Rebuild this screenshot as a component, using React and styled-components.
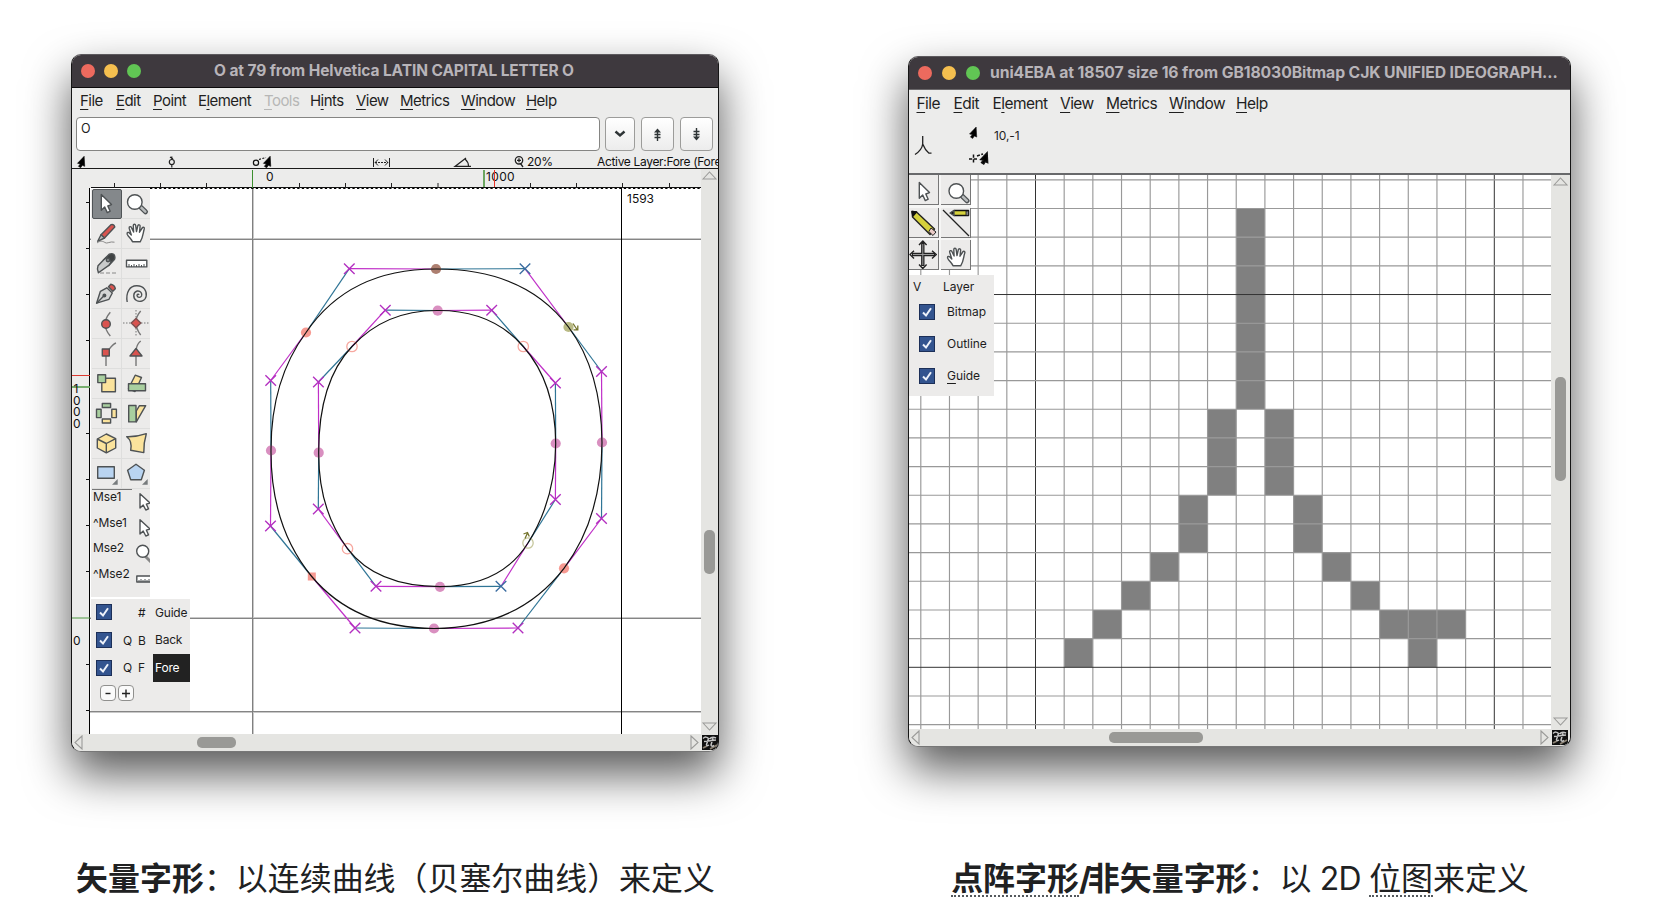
import React from "react";
import styled, { createGlobalStyle } from "styled-components";

const GlobalStyle = createGlobalStyle`
  * { box-sizing: border-box; }
  html, body { margin: 0; background: #fff; overflow: hidden; }
  svg { display: block; }
`;

const UI = `Inter, "Liberation Sans", sans-serif`;

const Page = styled.main`
  width: 1656px;
  height: 898px;
  overflow: hidden;
  display: grid;
  grid-template-columns: 790px 866px;
  background: #fff;
  font-family: ${UI};
  color: #202122;
`;

const Figure = styled.figure`
  margin: 0;
  padding-top: ${(p) => p.$top}px;
  padding-left: ${(p) => p.$left || 0}px;
  height: 898px;
  display: flex;
  flex-direction: column;
  align-items: center;
`;

const Caption = styled.figcaption`
  margin-top: ${(p) => p.$gap}px;
  padding-left: 1px;
  font-family: Inter, "Noto Sans CJK SC", sans-serif;
  font-size: 31.95px;
  line-height: 44px;
  white-space: nowrap;
`;

const Latin = styled.span`
  letter-spacing: ${(p) => p.$track}px;
`;

const Term = styled.span`
  border-bottom: 2px dotted #54595d;
  display: inline-block;
  height: 40px;
`;

const WindowFrame = styled.section`
  flex: none;
  width: ${(p) => p.$w}px;
  height: ${(p) => p.$h}px;
  border: 1px solid #161616;
  border-top-color: #5c595d;
  border-bottom-color: #777;
  border-radius: 10px;
  overflow: hidden;
  background: #ececeb;
  box-shadow: 0 22px 46px rgba(0, 0, 0, 0.66);
  display: flex;
  flex-direction: column;
`;

const TitleBar = styled.header`
  flex: none;
  height: 33px;
  background: #3e393e;
  border-bottom: 1px solid ${(p) => p.$line};
  display: flex;
  align-items: center;
  padding-left: 9px;
`;

const Light = styled.i`
  flex: none;
  width: 14px;
  height: 14px;
  border-radius: 50%;
  margin-right: ${(p) => p.$gap || 9}px;
  background: ${(p) => p.$c};
`;

const Title = styled.h1`
  margin: 0 0 0 ${(p) => p.$ml}px;
  font-size: ${(p) => p.$size}px;
  font-weight: 700;
  line-height: 20px;
  color: #b8b4b9;
  white-space: nowrap;
  letter-spacing: -0.1px;
`;

const MenuBar = styled.nav`
  flex: none;
  height: ${(p) => p.$h}px;
  padding: ${(p) => p.$pad};
  display: flex;
  font-size: ${(p) => p.$size}px;
  letter-spacing: -0.55px;
  line-height: 22px;
`;

const MenuItem = styled.span`
  flex: none;
  width: ${(p) => p.$w}px;
  color: ${(p) => (p.$off ? "#b7b7b6" : "#1f1f1f")};
  white-space: nowrap;
  u { text-decoration-thickness: 1px; text-underline-offset: 3px; text-decoration-skip-ink: none; }
`;

const EntryRow = styled.div`
  flex: none;
  height: 34px;
  padding-left: 4px;
  display: flex;
`;

const Entry = styled.div`
  flex: none;
  width: 524px;
  height: 34px;
  border: 1px solid #858583;
  border-radius: 4px;
  background: #fff;
  padding: 3px 4px;
  font-size: 12.5px;
  line-height: 16px;
  margin-right: 5px;
`;

const PushButton = styled.button`
  flex: none;
  width: ${(p) => p.$w}px;
  height: 34px;
  margin: 0 6px 0 0;
  padding: 0;
  border: 1px solid #9c9c9a;
  border-radius: 4px;
  background: linear-gradient(#fff, #ececec);
  display: flex;
  align-items: center;
  justify-content: center;
`;

const InfoRow = styled.div`
  flex: none;
  height: 18px;
  border-bottom: 1px solid #1a1a1a;
  display: grid;
  grid-template-columns: 86px 88px 119px 83px 66px 83px 1fr;
  font-size: 12px;
  line-height: 21px;
  letter-spacing: -0.33px;
  white-space: nowrap;
  color: #111;
`;

const InfoCell = styled.div`
  display: flex;
  gap: 3px;
  min-width: 0;
`;

const VectorBody = styled.div`
  flex: none;
  display: grid;
  grid-template-columns: 18px 611px 17px;
  grid-template-rows: 19px 546px 17px;
  grid-template-areas: "top top bar" "left canvas bar" "foot foot corner";
`;

const BitmapBody = styled.div`
  flex: none;
  display: grid;
  grid-template-columns: 642px 19px;
  grid-template-rows: 554px 17px;
  grid-template-areas: "canvas bar" "foot corner";
`;

const RulerTop = styled.div`
  grid-area: top;
`;

const RulerLeft = styled.div`
  grid-area: left;
`;

const Canvas = styled.div`
  grid-area: canvas;
  position: relative;
  overflow: hidden;
  background: #fff;
`;

const ScrollV = styled.div`
  grid-area: bar;
  background: #e5e5e2;
  display: flex;
  flex-direction: column;
  align-items: center;
  padding: 2px 0 3px;
`;

const ScrollH = styled.div`
  grid-area: foot;
  background: #e5e5e2;
  display: flex;
  align-items: center;
  padding: 0 2px;
`;

const ThumbV = styled.div`
  width: 11px;
  height: ${(p) => p.$len}px;
  margin: ${(p) => p.$before}px 0 auto;
  border-radius: 5px;
  background: #999996;
`;

const ThumbH = styled.div`
  height: 11px;
  width: ${(p) => p.$len}px;
  margin: 0 auto 0 ${(p) => p.$before}px;
  border-radius: 5px;
  background: #999996;
`;

const Corner = styled.div`
  grid-area: corner;
  background: #e5e5e2;
  padding: 1px 0 0 1px;
`;

const ToolPalette = styled.aside`
  position: absolute;
  left: 1px;
  top: 1px;
  width: 59px;
  height: 408px;
  overflow: hidden;
  background: #ecebea;
  padding-left: 1px;
`;

const ToolGrid = styled.div`
  display: grid;
  grid-template-columns: 30px 30px;
  grid-template-rows: repeat(10, 30.05px);
`;

const Tool = styled.div`
  width: 30px;
  height: 30px;
  border-right: 1px solid #dededd;
  border-bottom: 1px solid #dededd;
  ${(p) => p.$active && `background:#84888b;border:1px solid #505457;border-radius:2px;`}
  svg { margin: ${(p) => (p.$active ? "-1px" : "0 0 0 -0.4px")}; }
`;

const ToolRule = styled.div`
  width: 40px;
  height: 1px;
  background: #777;
`;

const MouseRow = styled.div`
  height: 25.4px;
  display: flex;
  justify-content: space-between;
  font-size: 12px;
  line-height: 13px;
  letter-spacing: -0.1px;
  padding-left: 1px;
  color: #1d1d1d;
  svg { flex: none; margin: 3px 0 0; }
`;

const LayerPalette = styled.aside`
  position: absolute;
  left: 1px;
  top: 410.5px;
  width: 99px;
  height: 112px;
  background: #ecebea;
  font-size: 12px;
  letter-spacing: -0.2px;
  color: #1d1d1d;
`;

const LayerRow = styled.div`
  height: 27.7px;
  display: grid;
  grid-template-columns: 32px 15px 15px 37px;
  align-items: center;
`;

const CheckBox = styled.span`
  display: block;
  width: 16px;
  height: 16px;
  margin-left: ${(p) => p.$ml}px;
  background: #33548f;
  border: 1px solid #1c2f58;
`;

const LayerName = styled.span`
  height: 27.7px;
  line-height: 28px;
  padding-left: 2px;
  ${(p) => p.$on && `background:#222;color:#fff;`}
`;

const SmallButtons = styled.div`
  display: flex;
  gap: 2.5px;
  padding: 3.5px 0 0 8.5px;
`;

const SmallButton = styled.button`
  width: 16px;
  height: 16px;
  padding: 0;
  border: 1px solid #90908e;
  border-radius: 4px;
  background: #fafafa;
  display: grid;
  place-items: center;
`;

const BitmapInfo = styled.div`
  flex: none;
  height: 59px;
  border-bottom: 2px solid #68696b;
  display: grid;
  grid-template-columns: 55px 30px 1fr;
  font-size: 12px;
  letter-spacing: -0.1px;
  color: #1f1f1f;
`;

const Coordinates = styled.span`
  padding-top: 12px;
  line-height: 16px;
`;

const BitmapTools = styled.aside`
  position: absolute;
  left: 0;
  top: 0;
  width: 62px;
  height: 95px;
  display: grid;
  grid-template-columns: 30px 30px;
  grid-template-rows: 30px 30px 30px;
  gap: 2.5px 2px;
  background: #f6f6f5;
`;

const BitmapTool = styled.div`
  background: #ecebea;
  border-right: 1px solid #777;
  border-bottom: 1px solid #777;
  overflow: hidden;
`;

const BitmapLayers = styled.aside`
  position: absolute;
  left: 0;
  top: 100px;
  width: 85px;
  height: 121px;
  background: #ecebea;
  font-size: 12px;
  letter-spacing: -0.05px;
  color: #1d1d1d;
  u { text-underline-offset: 3px; text-decoration-thickness: 1px; text-decoration-skip-ink: none; }
`;

const BitmapLayerHead = styled.div`
  height: 20.5px;
  padding: 4px 0 0 4px;
  line-height: 16px;
  display: grid;
  grid-template-columns: 30px 1fr;
`;

const BitmapLayerRow = styled.div`
  height: 32.2px;
  display: grid;
  grid-template-columns: 38px 1fr;
  align-items: center;
`;

/* ---------- icons ---------- */

const INK = "#4e5254";
const YEL = "#fbe39c";
const GRN = "#a9cf9f";
const RED = "#d9534f";

const Icon = ({ children, w = 30, h = 30 }) => (
  <svg width={w} height={h} viewBox={`0 0 ${w} ${h}`} fill="none" stroke={INK} strokeWidth="1.4" strokeLinejoin="round">
    {children}
  </svg>
);

const Check = ({ ml }) => (
  <CheckBox $ml={ml}>
    <svg width="14" height="14" viewBox="0 0 14 14" fill="none" stroke="#eef2fa" strokeWidth="2">
      <path d="M3 7.5 L6 10.5 L11 3.2" />
    </svg>
  </CheckBox>
);

const arrowPath = "M9.3 5.5 V21.3 L12.7 18 L15.3 23.6 L18.2 22.2 L15.8 17 L19.5 15.6 Z";
const Hand = () => (
  <path
    fill="#fff"
    d="M10.5 22.8 C9.5 20 6.5 18 5.2 15.2 C4.6 13.4 6.4 12.8 7.6 14.2 L9.3 16 L7.2 9.2 C6.8 7.4 8.8 7 9.5 8.6 L11.6 13 L11.3 6.6 C11.3 4.8 13.5 4.8 13.7 6.6 L14.5 12.6 L15.8 6.8 C16.3 5.2 18.4 5.6 18.1 7.4 L17.5 13.2 L20.2 9 C21.2 7.6 22.9 8.6 22.2 10.2 C21 13.5 21.2 18.2 18.2 22.8 Z"
  />
);

const Magnifier = () => (
  <>
    <path d="M18.8 18.2 L23.5 22.8" stroke={INK} strokeWidth="5" strokeLinecap="round" />
    <path d="M19.2 18.6 L23.3 22.6" stroke="#b9bcbd" strokeWidth="2.6" strokeLinecap="round" />
    <circle cx="12.8" cy="13" r="7.3" fill="#fff" />
  </>
);

const RulerShape = () => (
  <>
    <rect x="4.5" y="11.3" width="20.3" height="6.6" fill="#fff" />
    <path d="M7 18v-3M9.5 18v-2M12 18v-3M14.5 18v-2M17 18v-3M19.5 18v-2M22 18v-3" strokeWidth="1" />
  </>
);

const cornerMark = <path d="M25.7 20 V25.7 H20 Z" fill="#777b7d" stroke="none" />;

const TOOLS = [
  <path d={arrowPath} fill="#fff" />,
  <Magnifier />,
  <>
    <path d="M19.2 5.6 Q22 4.8 22.8 8 L12.5 19 L9 15.8 Z" fill={RED} />
    <path d="M9 15.8 L12.5 19 L5.7 22.3 Z" fill="#b9bcbd" />
    <path d="M5 24 C8 21.5 11 22 13 23.6 S18 22 22.5 23.2" stroke="#888" strokeWidth="1" />
  </>,
  <Hand />,
  <>
    <path d="M11.5 11 L17.2 5.2 Q20 3.9 22 5.6 Q23.6 8 22.4 10.6 L16.8 16.4 Z" fill="#3f4243" />
    <path d="M11.5 11 L14.5 8.4 L19.2 12.8 L16.8 16.4 L6.4 23.8 Q4.6 20.5 6 16.8 Z" fill="#c9cbcb" />
    <circle cx="16" cy="11" r="1.7" fill="#8b8f90" />
    <path d="M8 24 H24" strokeWidth="1" stroke="#888" strokeDasharray="4 2" />
  </>,
  <RulerShape />,
  <>
    <path d="M16.5 7.8 L18.8 5.2 Q22.8 6 23.3 9.7 L20.8 12.2 Z" fill={RED} />
    <path d="M14.8 8.8 L20.3 14 L17 20.3 L4.6 24.2 L8.4 12.3 Z" fill="#d4d5d5" />
    <path d="M4.6 24.2 L12 16.8" />
    <circle cx="12.4" cy="16.4" r="1.3" fill={INK} />
  </>,
  <path d="M5.2 23 C3.5 13 8 6.5 15 6.8 C22 7 25 12 24.2 17 C23.5 22 18 23.5 14.5 21.5 C10.5 19 11 13 15.2 12 C18.5 11.5 20.5 14.5 19.5 17 C18.5 19 15.2 18.8 15 16.5 C15.2 15 16.6 15 17 16" />,
  <>
    <path d="M18.3 3.2 Q8 15 18.3 27" stroke="#777" />
    <circle cx="14" cy="15" r="4.3" fill={RED} />
  </>,
  <>
    <path d="M1 14 H28 M14 1 V28" strokeDasharray="1.5 1.5" strokeWidth="1" stroke="#777" />
    <path d="M18.7 2 Q9 13 18.7 26" stroke="#777" />
    <path d="M14 9.4 L18.8 14 L14 18.8 L9.2 14 Z" fill={RED} stroke="#7b5050" />
  </>,
  <>
    <path d="M14 17 V27 M17 10.4 Q21 5 24 4" stroke="#777" />
    <rect x="10.3" y="10" width="7" height="7" fill={RED} />
  </>,
  <>
    <path d="M14 17 V27 M14.3 10 Q15 5 18.7 2" stroke="#777" />
    <path d="M14 9.4 L20 17 H8 Z" fill={RED} />
  </>,
  <>
    <rect x="9.8" y="9.2" width="13.6" height="13.6" fill={YEL} />
    <rect x="5.8" y="5.8" width="7.8" height="7.8" fill={GRN} />
  </>,
  <>
    <path d="M13.2 6.2 L19.5 8.5 L13 22.5 L6.5 19.5 Z" fill={YEL} />
    <rect x="6.5" y="14.8" width="17" height="7" fill={GRN} />
  </>,
  <>
    <rect x="10.3" y="4.5" width="8.3" height="4" fill={GRN} />
    <rect x="10.3" y="20" width="8.3" height="4" fill={YEL} />
    <rect x="4.5" y="10.3" width="4.6" height="8.3" fill={GRN} />
    <rect x="19.8" y="10.3" width="4.6" height="8.3" fill={YEL} />
  </>,
  <>
    <path d="M17.5 6.7 H23.7 L14.3 22.8 V12 Z" fill={YEL} />
    <rect x="6.7" y="6.5" width="7.3" height="16.4" fill={GRN} />
  </>,
  <>
    <path d="M14.3 5 L23.7 9.7 V19 L14.3 23.8 L5.3 19 V10 Z" fill={YEL} />
    <path d="M5.3 10 L14.3 14.5 L23.7 9.7 M14.3 14.5 V23.8" />
  </>,
  <path d="M4.7 7.7 Q15 8 24.3 4.7 Q21.5 14 21.8 23.6 L8.7 21.3 Q10.5 12 4.7 7.7 Z" fill={YEL} />,
  <>
    <rect x="5.7" y="7.8" width="16.6" height="11.4" fill="#b9d4f1" />
    {cornerMark}
  </>,
  <>
    <path d="M14 5.2 L22.4 11.2 L19.3 20.8 H8.7 L5.6 11.2 Z" fill="#b9d4f1" />
    {cornerMark}
  </>,
];

const MOUSE = [
  ["Mse1", <path d="M1 0.8 V15 L4.2 12 L6.8 17 L9.5 15.8 L7.4 11.2 L11 10 Z" fill="#fff" />],
  ["^Mse1", <path d="M1 0.8 V15 L4.2 12 L6.8 17 L9.5 15.8 L7.4 11.2 L11 10 Z" fill="#fff" />],
  [
    "Mse2",
    <>
      <path d="M8 11 L15 18" stroke="#888" strokeWidth="3" />
      <circle cx="6.7" cy="7.3" r="6" fill="#fff" />
    </>,
    14,
  ],
  [
    "^Mse2",
    <>
      <rect x="0.8" y="6" width="20" height="6" fill="#fff" />
      <path d="M3 12v-2M5 12v-3M7 12v-2M9 12v-3M11 12v-2M13 12v-3" strokeWidth="1" />
    </>,
    14,
  ],
];

const tinyArrow = "M7 0 L7.6 10.6 L5 9.4 L3.4 12 L1 10.6 L3 8 L0 7.4 Z";

const TRIANGLES = {
  up: "M1 8 L7.5 1 L14 8 Z",
  down: "M1 1 L7.5 8 L14 1 Z",
  left: "M8 1 L1 7.5 L8 14 Z",
  right: "M1 1 L8 7.5 L1 14 Z",
};

const Tri = ({ dir }) => {
  const vertical = dir === "up" || dir === "down";
  return (
    <svg width={vertical ? 15 : 9} height={vertical ? 9 : 15} fill="none" stroke="#9b9b99" strokeWidth="1.1">
      <path d={TRIANGLES[dir]} />
    </svg>
  );
};

const ForgeMark = () => (
  <svg width="16" height="15" viewBox="0 0 16 15">
    <rect width="16" height="15" fill="#111" />
    <path d="M1 13 L5 11 M8 14 L15 10" stroke="#8a8072" strokeWidth="1.8" fill="none" />
    <path d="M1 3.5 Q4 0.5 7 4 M7.5 4 Q10 1 14 3 M2 6.5 L14 5 M6.5 3.5 L4.5 9.5 Q5 11.5 7 10 M11 3 L9 10 Q9.5 12 12 10.5" stroke="#c4c4c4" strokeWidth="1.5" fill="none" />
  </svg>
);

/* ---------- glyph drawing ---------- */

// on-curve point, off-curve point, on-curve point, ... closed quadratic contours
const OUTER = [
  [436, 269], [349.3, 268.7], [306, 332.5], [270.7, 380.5], [271, 450.5], [270.5, 526], [311.7, 576.5], [355, 628],
  [434, 628.5], [518, 628], [564, 568.3], [601.5, 518.5], [602, 442.5], [601.5, 371.5], [568.5, 327], [525, 268.7],
];
const INNER = [
  [437.7, 310.5], [491.7, 310.2], [523.3, 346.5], [555.4, 383], [555.7, 443.5], [555.4, 499.5], [528, 543], [501, 586.3],
  [440, 586.7], [376, 586.3], [347.5, 548.7], [318.3, 509], [318.7, 452.7], [318.4, 382], [352, 346.5], [385.3, 310.2],
];
const MAGENTA = "#c02fc8";
const BLUE = "#2f7596";

const contour = (pts) => {
  let d = `M${pts[0]}`;
  for (let i = 1; i < pts.length; i += 2) d += ` Q${pts[i]} ${pts[(i + 1) % pts.length]}`;
  return d + "Z";
};

const Handles = ({ pts, blueAt }) =>
  pts.map((p, i) => {
    const q = pts[(i + 1) % pts.length];
    return (
      <g key={i}>
        <line x1={p[0]} y1={p[1]} x2={q[0]} y2={q[1]} stroke={i % 2 === 0 ? MAGENTA : BLUE} strokeWidth="1.2" />
        {i % 2 === 1 && (
          <path
            d={`M${p[0] - 5.3} ${p[1] - 5.3} l10.6 10.6 m0 -10.6 l-10.6 10.6`}
            stroke={i === blueAt ? "#3a6ca0" : "#b32fc0"}
            strokeWidth="1.35"
          />
        )}
      </g>
    );
  });

const PINK = "#d98fc0";
const SALMON = "#f79a92";
const OLIVE = "#b9ba85";

const FILLED = [
  [436, 269, "#ad7f70"], [602, 442.5, PINK], [434, 628.5, PINK], [271, 450.5, PINK], [306, 332.5, SALMON], [564, 568.3, SALMON],
  [568.5, 327, OLIVE], [437.7, 310.7, PINK], [555.7, 443.5, PINK], [440, 586.8, PINK], [318.7, 452.7, PINK],
];
const HOLLOW = [[352, 346.5, "#f7a8a0"], [523.3, 346.5, "#f7a8a0"], [347.5, 548.7, "#f7a8a0"], [528, 543, "#c6c79d"]];

const GlyphDrawing = () => (
  <svg width="611" height="546" viewBox="90 188 611 546" fill="none">
    <g strokeWidth="1">
      <path d="M90 238.5 H701 M90 617.5 H701 M90 712.5 H701 M253.5 188 V734" stroke="#c8c8c8" />
      <path d="M90 239.5 H701 M90 618.5 H701 M90 711.5 H701" stroke="#858585" />
      <path d="M252.5 188 V734" stroke="#808080" />
      <path d="M621.5 188 V734" stroke="#000" />
      <path d="M150 188.5 H701" stroke="#000" strokeDasharray="2.3 2.3" />
    </g>
    <Handles pts={OUTER} blueAt={15} />
    <Handles pts={INNER} blueAt={7} />
    {FILLED.map(([x, y, c]) => <circle key={x} cx={x} cy={y} r="5.1" fill={c} />)}
    <rect x="307.8" y="572.5" width="8" height="8" fill={SALMON} />
    {HOLLOW.map(([x, y, c]) => <circle key={x} cx={x} cy={y} r="5.2" stroke={c} strokeWidth="1.3" />)}
    <path d={contour(OUTER)} stroke="#111" strokeWidth="1.2" />
    <path d={contour(INNER)} stroke="#111" strokeWidth="1.2" />
    <path d="M573 323.5 L577 329.5 M573.5 329.8 H577.8 V325.5" stroke="#74742c" strokeWidth="1.3" />
    <path d="M525 538.5 L527.5 533 M523.5 534 L527.5 532.5 L529.3 536.5" stroke="#74742c" strokeWidth="1.3" />
    <text x="627" y="202.5" fontFamily={UI} fontSize="12" fill="#111">1593</text>
  </svg>
);

const TopRuler = () => (
  <svg width="629" height="19" viewBox="72 169 629 19" fill="none">
    <path d="M91 187.5 H701" stroke="#111" />
    <path d="M114.5 183 V188 M160.5 183 V188 M206.5 183 V188 M299.5 183 V188 M345.5 183 V188 M391.5 183 V188 M438 183 V188 M530.5 183 V188 M576.5 183 V188 M622.5 183 V188 M669.5 183 V188" stroke="#222" />
    <path d="M252.5 170 V188" stroke="#3c8f2e" />
    <path d="M484 170 V187" stroke="#5fa052" strokeWidth="1.8" />
    <text x="266" y="180.7" fontFamily={UI} fontSize="12" fill="#111">0</text>
    <text x="486" y="180.7" fontFamily={UI} fontSize="12" fill="#111" letterSpacing="0.35">1000</text>
    <path d="M494.5 170 V187" stroke="#e8342a" />
  </svg>
);

const LeftRuler = () => (
  <svg width="18" height="546" viewBox="72 188 18 546" fill="none">
    <path d="M89.5 188 V734" stroke="#000" />
    <path d="M86 202.5 h4 M86 248.5 h4 M86 294.5 h4 M86 340.5 h4 M86 433.5 h4 M86 479.5 h4 M86 525.5 h4 M86 571.5 h4 M86 664.5 h4 M86 710.5 h4" stroke="#111" />
    <path d="M72 375.5 H90" stroke="#dc3a30" />
    <path d="M72 387 H90" stroke="#6aa860" strokeWidth="1.8" />
    <path d="M72 618 H90" stroke="#4f9a42" />
    <g fontFamily={UI} fontSize="12" fill="#111">
      <text x="73.5" y="393">1</text>
      <text x="73" y="404.6">0</text>
      <text x="73" y="416.2">0</text>
      <text x="73" y="427.8">0</text>
      <text x="73" y="645">0</text>
    </g>
  </svg>
);

const PITCH = 28.675;
const X0 = 1035.5;
const Y0 = 208.5;
const RASTER = [[7], [7], [7], [7], [7], [7], [7], [6, 8], [6, 8], [6, 8], [5, 9], [5, 9], [4, 10], [3, 11], [2, 12, 13, 14], [1, 13]];

const BitmapDrawing = () => (
  <svg width="642" height="554" viewBox="909 175 642 554" fill="none">
    {RASTER.flatMap((cols, r) =>
      cols.map((c) => <rect key={`${r}-${c}`} x={X0 + c * PITCH} y={Y0 + r * PITCH} width={PITCH} height={PITCH} fill="#808080" />)
    )}
    {Array.from({ length: 22 }, (_, k) => k - 4).map((i) => {
      const x = X0 + i * PITCH;
      const dark = i === 0 || i === 16;
      return <line key={i} x1={x} x2={x} y1="175" y2="729" stroke={dark ? "#333" : "#999"} strokeWidth={dark ? 1 : 1.15} />;
    })}
    {Array.from({ length: 20 }, (_, k) => k - 1).map((j) => {
      const y = Y0 + j * PITCH;
      const dark = j === 3 || j === 16;
      return <line key={j} y1={y} y2={y} x1="909" x2="1551" stroke={dark ? "#333" : "#999"} strokeWidth={dark ? 1 : 1.15} />;
    })}
  </svg>
);

const BITMAP_TOOLS = [
  <path d={arrowPath} fill="#fff" transform="translate(1 2)" />,
  <g transform="translate(2.5 3)"><Magnifier /></g>,
  <>
    <path d="M3 3.5 L7.5 4 L25.5 21 L21 26.5 L3.5 9 Z" fill="#d5d13c" stroke="#222" />
    <path d="M3 3.5 L7.5 4 L4 8 Z" fill="#111" stroke="#111" />
    <path d="M22 20 L27 24 L24 27.5 L19.8 23.5 Z" fill="#eccdc8" stroke="#222" strokeWidth="1" />
  </>,
  <>
    <path d="M2 2 L28 28" stroke="#222" strokeWidth="1.2" />
    <path d="M10 5 L13 2.5 H27.5 V7.5 H13 Z" fill="#d5d13c" stroke="#111" />
    <path d="M9 5 L13 2.5 V7.5 Z" fill="#111" />
    <rect x="25" y="3" width="2.6" height="4.4" fill="#888" stroke="#111" strokeWidth="0.8" />
  </>,
  <>
    <path d="M13.8 3 V26 M3 14.5 H26" stroke="#222" strokeWidth="3.4" />
    <path d="M13.8 4 V25 M4 14.5 H25" stroke="#999" strokeWidth="1" />
    <path d="M10 5 L13.8 1 L17.6 5 M10 24.5 L13.8 28.5 L17.6 24.5 M5 10.8 L1 14.5 L5 18.4 M23 10.8 L27.3 14.5 L23 18.4" stroke="#222" />
  </>,
  <g transform="translate(1.5 3)"><Hand /></g>,
];

const Menu = ({ items, ...rest }) => (
  <MenuBar {...rest}>
    {items.map(([pre, key, post, w, off]) => (
      <MenuItem key={pre + key + post} $w={w} $off={off}>
        {pre}<u>{key}</u>{post}
      </MenuItem>
    ))}
  </MenuBar>
);

const VectorWindow = () => (
  <WindowFrame $w={648} $h={698}>
    <TitleBar $line="#0c0b0c">
      <Light $c="#ed6a5e" /><Light $c="#f5bf4f" /><Light $c="#61c554" />
      <Title $ml={64} $size={15.5}>O at 79 from Helvetica LATIN CAPITAL LETTER O</Title>
    </TitleBar>
    <Menu
      $h={29} $pad="2px 0 0 8px" $size={15}
      items={[["", "F", "ile", 36], ["", "E", "dit", 37], ["", "P", "oint", 45], ["E", "l", "ement", 66], ["", "T", "ools", 46, true],
        ["H", "i", "nts", 46], ["", "V", "iew", 44], ["", "M", "etrics", 61], ["", "W", "indow", 65], ["", "H", "elp", 40]]}
    />
    <EntryRow>
      <Entry>O</Entry>
      <PushButton $w={30}>
        <svg width="12" height="8" fill="none" stroke="#2e3436" strokeWidth="2.4"><path d="M1.5 1.5 L6 5.5 L10.5 1.5" /></svg>
      </PushButton>
      <PushButton $w={33}>
        <svg width="9" height="13" fill="none" stroke="#2e3436" strokeWidth="1.4"><path d="M4.5 2 V13 M1.5 6.5 H7.5 M1.5 9.5 H7.5" /><path d="M1 4.5 L4.5 0.5 L8 4.5 Z" fill="#2e3436" stroke="none" /></svg>
      </PushButton>
      <PushButton $w={33}>
        <svg width="9" height="13" fill="none" stroke="#2e3436" strokeWidth="1.4"><path d="M4.5 0 V11 M1.5 3.5 H7.5 M1.5 6.5 H7.5" /><path d="M1 8.5 L4.5 12.5 L8 8.5 Z" fill="#2e3436" stroke="none" /></svg>
      </PushButton>
    </EntryRow>
    <InfoRow>
      <InfoCell><svg width="20" height="17"><path d={tinyArrow} transform="translate(5.5 5.3) scale(0.95)" fill="#000" stroke="#000" strokeWidth="0.6" /></svg></InfoCell>
      <InfoCell><svg width="20" height="17" fill="none" stroke="#222" strokeWidth="1.2"><circle cx="13.8" cy="11" r="2.5" /><path d="M13.8 5.5 V8.5 M13.8 13.5 V16.5 M12 6 l3 2" /></svg></InfoCell>
      <InfoCell><svg width="30" height="17" fill="none" stroke="#111" strokeWidth="1.2"><circle cx="10" cy="11.7" r="2.6" /><path d="M13 8.5 L20 6.5" strokeDasharray="2 1.5" /><path d={tinyArrow} transform="translate(17.5 5.3) scale(0.95)" fill="#000" strokeWidth="0.8" /></svg></InfoCell>
      <InfoCell><svg width="30" height="17" fill="none" stroke="#222"><path d="M8.5 7 V16 M24.5 7 V16" /><path d="M10 11.5 H23" strokeDasharray="2 1" /><path d="M13 8.5 L10.2 11.5 L13 14.5 M20 8.5 L22.8 11.5 L20 14.5" /></svg></InfoCell>
      <InfoCell><svg width="30" height="17" fill="none" stroke="#222" strokeWidth="1.2"><path d="M18 7 L7 15.4 H23 M17 8 Q20.5 11 20.5 15" /></svg></InfoCell>
      <InfoCell>
        <svg width="10" height="17" fill="none" stroke="#222" strokeWidth="1.3"><circle cx="5" cy="9.3" r="3.7" /><path d="M3 9.3 H7 M5 7.3 V11.3 M6.5 12.5 L9 16" /></svg>
        <span>20%</span>
      </InfoCell>
      <InfoCell>Active Layer:Fore (Fore)</InfoCell>
    </InfoRow>
    <VectorBody>
      <RulerTop><TopRuler /></RulerTop>
      <ScrollV><Tri dir="up" /><ThumbV $before={350} $len={44} /><Tri dir="down" /></ScrollV>
      <RulerLeft><LeftRuler /></RulerLeft>
      <Canvas>
        <GlyphDrawing />
        <ToolPalette>
          <ToolGrid>{TOOLS.map((t, i) => <Tool key={i} $active={i === 0}><Icon>{t}</Icon></Tool>)}</ToolGrid>
          <ToolRule />
          {MOUSE.map(([label, art, w = 11]) => (
            <MouseRow key={label}>{label}<Icon w={w} h={20}>{art}</Icon></MouseRow>
          ))}
        </ToolPalette>
        <LayerPalette>
          <LayerRow><Check ml={5} /><span /><span>#</span><LayerName>Guide</LayerName></LayerRow>
          <LayerRow><Check ml={5} /><span>Q</span><span>B</span><LayerName>Back</LayerName></LayerRow>
          <LayerRow><Check ml={5} /><span>Q</span><span>F</span><LayerName $on>Fore</LayerName></LayerRow>
          <SmallButtons>
            <SmallButton><svg width="10" height="10"><path d="M2.5 5.5 H7.5" stroke="#222" strokeWidth="1.4" /></svg></SmallButton>
            <SmallButton><svg width="10" height="10"><path d="M1 5.5 H9 M5 1.5 V9.5" stroke="#222" strokeWidth="1.4" /></svg></SmallButton>
          </SmallButtons>
        </LayerPalette>
      </Canvas>
      <ScrollH><Tri dir="left" /><ThumbH $before={114} $len={39} /><Tri dir="right" /></ScrollH>
      <Corner><ForgeMark /></Corner>
    </VectorBody>
  </WindowFrame>
);

const BitmapWindow = () => (
  <WindowFrame $w={663} $h={691}>
    <TitleBar $line="#6a676a">
      <Light $c="#ed6a5e" $gap={10} /><Light $c="#f5bf4f" $gap={10} /><Light $c="#61c554" $gap={9} />
      <Title $ml={1} $size={15.75}>uni4EBA at 18507 size 16 from GB18030Bitmap CJK UNIFIED IDEOGRAPH...</Title>
    </TitleBar>
    <Menu
      $h={26} $pad="3px 0 0 7.5px" $size={15.5}
      items={[["", "F", "ile", 37], ["", "E", "dit", 39], ["E", "l", "ement", 67.5], ["", "V", "iew", 46], ["", "M", "etrics", 63], ["", "W", "indow", 67], ["", "H", "elp", 40]]}
    />
    <BitmapInfo>
      <svg width="30" height="50" fill="none" stroke="#222" strokeWidth="1.3"><path d="M13.7 20 V28 Q13 34 6 38.5 M13.7 28 Q16 34 20 37.2 H22.5" /></svg>
      <svg width="29" height="50" fill="none" stroke="#111"><path d={tinyArrow} transform="translate(5.5 11) scale(0.95)" fill="#000" strokeWidth="0.6" /><path d="M5 43 H14 M9.5 38.5 V47.5" strokeDasharray="3.2 1.6" strokeWidth="1.5" /><path d="M13 40 L19 38" strokeDasharray="3 1.5" strokeWidth="1.5" /><path d={tinyArrow} transform="translate(16.5 36.6) scale(0.95)" fill="#000" strokeWidth="1.4" /></svg>
      <Coordinates>10,-1</Coordinates>
    </BitmapInfo>
    <BitmapBody>
      <Canvas>
        <BitmapDrawing />
        <BitmapTools>{BITMAP_TOOLS.map((t, i) => <BitmapTool key={i}><Icon>{t}</Icon></BitmapTool>)}</BitmapTools>
        <BitmapLayers>
          <BitmapLayerHead><span>V</span><span>Layer</span></BitmapLayerHead>
          <BitmapLayerRow><Check ml={10} /><span>Bitmap</span></BitmapLayerRow>
          <BitmapLayerRow><Check ml={10} /><span>Outline</span></BitmapLayerRow>
          <BitmapLayerRow><Check ml={10} /><span><u>G</u>uide</span></BitmapLayerRow>
        </BitmapLayers>
      </Canvas>
      <ScrollV><Tri dir="up" /><ThumbV $before={190.5} $len={104} /><Tri dir="down" /></ScrollV>
      <ScrollH><Tri dir="left" /><ThumbH $before={189} $len={94} /><Tri dir="right" /></ScrollH>
      <Corner><ForgeMark /></Corner>
    </BitmapBody>
  </WindowFrame>
);

export default function App() {
  return (
    <Page>
      <GlobalStyle />
      <Figure $top={54}>
        <VectorWindow />
        <Caption $gap={105}><b>矢量字形</b>：以连续曲线（贝塞尔曲线）来定义</Caption>
      </Figure>
      <Figure $top={56} $left={33}>
        <BitmapWindow />
        <Caption $gap={110}>
          <Term><b>点阵字形</b></Term><b><Latin $track={-3.5}>/</Latin>非矢量字形</b>：以<Latin $track={-0.7}> 2D </Latin><Term>位图</Term>来定义
        </Caption>
      </Figure>
    </Page>
  );
}
